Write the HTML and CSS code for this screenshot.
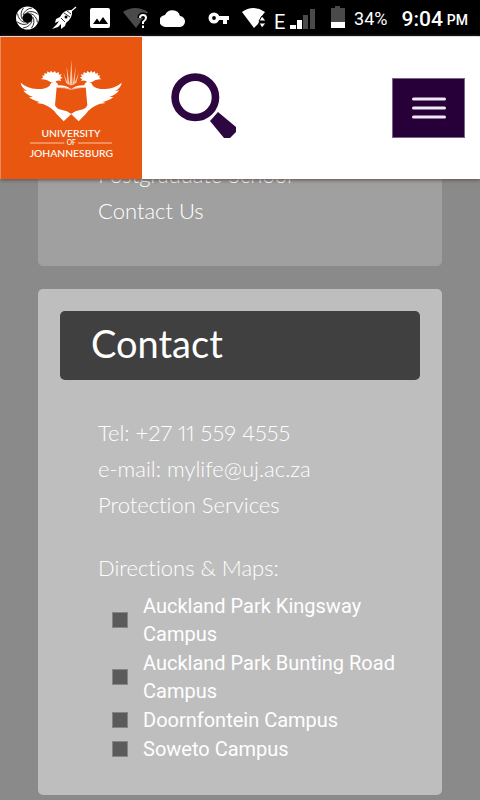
FILE: index.html
```html
<!DOCTYPE html>
<html lang="en">
<head>
<meta charset="utf-8">
<meta name="viewport" content="width=device-width, initial-scale=1">
<title>University of Johannesburg</title>
<link rel="stylesheet" href="styles.css">
</head>
<body>
<div class="top">
  <div class="status">
    <div class="status-left">
      <svg width="24" height="24" viewBox="0 0 24 24" aria-hidden="true"><circle cx="11.500" cy="12" r="8.300" fill="none" stroke="#fff" stroke-width="6.400"/><g fill="none" stroke="#000" stroke-width="0.800"><path id="s" d="M7 9Q9 3 16 2"/><use href="#s" transform="rotate(45 11.500 12)"/><use href="#s" transform="rotate(90 11.500 12)"/><use href="#s" transform="rotate(135 11.500 12)"/><use href="#s" transform="rotate(180 11.500 12)"/><use href="#s" transform="rotate(225 11.500 12)"/><use href="#s" transform="rotate(270 11.500 12)"/><use href="#s" transform="rotate(315 11.500 12)"/></g></svg>
      <svg width="25" height="24" viewBox="0 0 25 24" aria-hidden="true"><path d="M24 1L17 7" stroke="#fff" stroke-width="1.200"/><path d="M20 4Q12 3 8 11L4 13 3 17 7 15 5 18 0 23 6 21 9 18 9 23 13 20 14 17Q21 12 20 4Z" fill="#fff"/><path d="M12 7L18 11M9 12L13 16M15 5L19 8" stroke="#000" stroke-width="0.800"/><circle cx="14" cy="11" r="1.500" fill="#000"/></svg>
      <svg width="22" height="24" viewBox="0 0 22 24" aria-hidden="true"><rect x="1" y="2" width="20" height="20" rx="2" fill="#fff"/><path d="M4 18L8 12.500 10.500 16 14 11 19 18Z" fill="#000"/></svg>
      <svg width="25" height="24" viewBox="0 0 25 24" aria-hidden="true"><path d="M0 6Q12-2 25 6L13 22Z" fill="#4a4a4a"/><path d="M17 12Q17 9 20 9T23 12Q23 14 20 16V18M20 19.500V22" fill="none" stroke="#000" stroke-width="5"/><path d="M17 12Q17 9 20 9T23 12Q23 14 20 16V18M20 19.500V22" fill="none" stroke="#fff" stroke-width="2"/></svg>
      <svg width="25" height="24" viewBox="0 0 25 24" aria-hidden="true"><path d="M6 21A6 6 0 0 1 5 9A8 8 0 0 1 20 10A5.500 5.500 0 0 1 19 21Z" fill="#fff"/></svg>
    </div>
    <div class="status-right">
      <svg width="26" height="24" viewBox="0 0 26 24" aria-hidden="true"><circle cx="6" cy="12" r="3.700" fill="none" stroke="#fff" stroke-width="3.600"/><path d="M10 10H21V14H19V18H15V14H10Z" fill="#fff"/></svg>
      <svg width="24" height="24" viewBox="0 0 24 24" aria-hidden="true"><path d="M0 6Q11-2 23 6L19 11 16 18 12 22Z" fill="#fff"/><path d="M17 15L20 10 24 15ZM17 17H24L20 22Z" fill="#fff" stroke="#000" stroke-width="1"/></svg>
      <span class="edge">E</span>
      <svg width="25" height="24" viewBox="0 0 25 24" aria-hidden="true"><path d="M0 19H6V23H0ZM7 14H12V23H7Z" fill="#fff"/><path d="M13 9H18V23H13ZM20 3H25V23H20Z" fill="#4a4a4a"/></svg>
      <svg width="23" height="24" viewBox="0 0 23 24" aria-hidden="true"><path d="M8 2H12V0H17V2H22V16H8Z" fill="#4a4a4a"/><path d="M8 16H22V22H8Z" fill="#fff"/></svg>
      <span class="battery">34%</span>
      <span class="time">9:04</span><span class="pm">PM</span>
    </div>
  </div>
  <header class="header">
    <a class="logo" href="#" aria-label="University of Johannesburg">
      <svg viewBox="0 0 426 426" aria-hidden="true">
        <g id="bird" fill="#fff">
          <path d="M62 137Q82 155 111 156Q137 157 149 146Q151 135 163 134Q174 136 174 145Q195 144 213 155Q190 149 170 150L165 205Q170 217 184 218Q202 221 214 231L191 253 169 230Q157 212 129 201L110 198 119 195Q96 189 87 180L99 180Q75 171 70 160L82 163Q63 151 62 137Z"/>
          <path d="M151 135Q139 125 123 127L130 121 126 116 134 115 133 108 141 110 142 103 149 107 153 101 158 107 165 102 168 109 176 105 177 113 185 112 181 119 188 122 180 126 184 132Q170 128 164 137Z"/>
          <path d="M169 151Q195 151 213 157" fill="none" stroke="#fff" stroke-width="2"/>
        </g>
        <use href="#bird" transform="translate(427 0) scale(-1 1)"/>
        <path d="M214 68L218 145H209ZM200 88L209 144 202 141ZM227 88L224 141 218 144ZM190 106L204 142 198 137ZM237 106L229 137 222 142Z" fill="#fbc5a7"/>
        <g fill="#fff" text-anchor="middle" class="logo-text"><text x="213" y="301" font-size="31">UNIVERSITY</text><text x="214" y="325" font-size="20">OF</text><text x="214" y="359" font-size="31">JOHANNESBURG</text></g>
        <path d="M90 318H193M234 318H336" stroke="#fbc5a7" stroke-width="3"/>
      </svg>
    </a>
    <button class="search" type="button" aria-label="Search">
      <svg width="65" height="70" viewBox="0 0 65 70"><circle cx="24.300" cy="24.300" r="20.200" fill="none" stroke="#2d073f" stroke-width="7.600"/><path d="M47 39L65 54V59L59 65H53L39 48Z" fill="#2d073f"/></svg>
    </button>
    <button class="menu" type="button" aria-label="Menu">
      <svg width="34" height="24" viewBox="0 0 34 24"><path d="M1.500 3H32.500M1.500 12H32.500M1.500 21H32.500" stroke="#efe9f1" stroke-width="3" stroke-linecap="round"/></svg>
    </button>
  </header>
</div>
<main class="page">
  <section class="card card-links">
    <a href="#">Postgraduate School</a>
    <a href="#">Contact Us</a>
  </section>
  <section class="card card-contact">
    <h2>Contact</h2>
    <div class="details">
      <p>Tel: +27 11 559 4555</p>
      <p>e-mail: mylife@uj.ac.za</p>
      <a href="#">Protection Services</a>
      <p class="maps-title">Directions &amp; Maps:</p>
      <ul class="maps">
        <li><a href="#">Auckland Park Kingsway Campus</a></li>
        <li><a href="#">Auckland Park Bunting Road Campus</a></li>
        <li><a href="#">Doornfontein Campus</a></li>
        <li><a href="#">Soweto Campus</a></li>
      </ul>
    </div>
  </section>
</main>
</body>
</html>
```
FILE: styles.css
```css
*, *::before { box-sizing: border-box; }

body {
  margin: 0;
  background: #8a8a8a;
  color: #fff;
  font-family: Lato, "Liberation Sans", sans-serif;
  font-variant-ligatures: none;
}

a { color: inherit; text-decoration: none; }
p { margin: 0; }
svg { display: block; flex: none; }
button { border: 0; padding: 0; background: none; }

.top { position: sticky; top: 0; z-index: 1; }

.status {
  display: flex;
  justify-content: space-between;
  height: 36px;
  padding: 6px 12px 6px 16px;
  background: #000;
  font-family: Roboto, sans-serif;
  line-height: 24px;
}

.status-left { display: flex; gap: 12px; }
.status-right { display: flex; gap: 8px; }
.edge { width: 8px; font-size: 20px; line-height: 32px; }
.battery { font-size: 18px; line-height: 26px; }
.time { margin-left: 6px; font-size: 21px; font-weight: 500; line-height: 26px; }
.pm { margin-left: -4px; font-size: 14px; font-weight: 500; line-height: 28px; }

.header {
  display: flex;
  align-items: center;
  padding-right: 15px;
  background: #fff;
  border-top: 1px solid #ddd;
  box-shadow: 0 1px 4px #5c5048;
}

.logo {
  width: 142px;
  background: #e8560f;
  box-shadow: inset 1px 0 #ee8a59;
}

.logo-text { font-family: Lato, sans-serif; font-weight: 500; }
.search { margin-left: 29px; }

.menu {
  display: grid;
  place-items: center;
  width: 73px;
  height: 60px;
  margin-left: auto;
  background: #27003a;
  border: 1px solid #7b6487;
}

.page {
  display: grid;
  gap: 23px;
  margin-top: -22px;
  padding: 0 38px 5px;
}

.card {
  border-radius: 5px;
  font-size: 22px;
  font-weight: 300;
  font-variant-numeric: proportional-nums;
  line-height: 36px;
}

.card-links {
  display: grid;
  padding: 0 60px 37px;
  background: #a0a0a0;
}

.card-contact {
  padding: 22px 22px 32px;
  background: #bebebe;
}

h2 {
  margin: 0 0 35px;
  padding: 0 31px 4px;
  border-radius: 5px;
  background: #404040;
  font-size: 38px;
  font-weight: 400;
  line-height: 65px;
}

.details { padding-left: 38px; }
.maps-title { margin: 27px 0 6px; }

.maps {
  display: grid;
  gap: 1px;
  margin: 0;
  padding: 0 0 0 14px;
  list-style: none;
  font-family: Roboto, sans-serif;
  font-size: 20px;
  font-weight: 400;
  line-height: 28px;
}

.maps li { display: flex; align-items: center; gap: 15px; }

.maps li::before {
  content: "";
  flex: none;
  width: 16px;
  height: 16px;
  background: #5a5a5a;
  border: 1px solid #858585;
}
```
